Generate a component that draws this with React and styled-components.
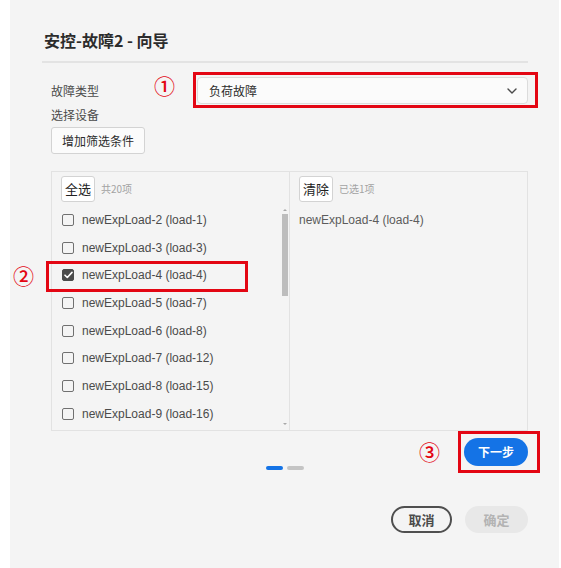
import React from 'react';
import styled, { createGlobalStyle } from 'styled-components';

const Global = createGlobalStyle`
  html, body { margin: 0; padding: 0; background: #ffffff; }
  body { font-family: "Liberation Sans", "Noto Sans CJK SC", sans-serif; }
  * { box-sizing: border-box; }
`;

const CJK = `"Noto Sans CJK SC", "Liberation Sans", sans-serif`;

const Page = styled.div`
  position: relative;
  width: 561px;
  height: 568px;
  padding-left: 10px;
  overflow: hidden;
`;

const Dialog = styled.div`
  width: 549px;
  height: 568px;
  background: #f4f4f4;
  padding: 28px 31px 0 32px;
  display: flex;
  flex-direction: column;
`;

const Title = styled.h2`
  margin: 0;
  padding-left: 2px;
  font: 700 16px/24px ${CJK};
  color: #2c2c2c;
`;

const Divider = styled.div`
  margin-top: 9px;
  height: 2px;
  background: #e3e3e3;
`;

const Form = styled.div`
  padding-left: 9px;
  margin-top: 14px;
  display: flex;
  flex-direction: column;
`;

const FieldRow = styled.div`
  display: flex;
  align-items: center;
  height: 27px;
`;

const Label = styled.div`
  width: 146px;
  font: 400 12px/16px ${CJK};
  color: #4b4b4b;
  margin-top: ${(p) => p.$mt || 0}px;
`;

const Select = styled.div`
  flex: 1;
  height: 27px;
  background: #fbfbfb;
  border: 1px solid #dcdcdc;
  border-radius: 4px;
  padding: 0 10px 0 11px;
  display: flex;
  align-items: center;
  justify-content: space-between;
  font: 400 12px/16px ${CJK};
  color: #2c2c2c;
`;

const GhostButton = styled.button`
  align-self: flex-start;
  margin-top: 4px;
  height: 27px;
  padding: 0 10px;
  background: #fbfbfb;
  border: 1px solid #d3d3d3;
  border-radius: 3px;
  font: 400 12px/16px ${CJK};
  color: #2c2c2c;
`;

const Transfer = styled.div`
  margin-top: 17px;
  height: 260px;
  border: 1px solid #e2e2e2;
  display: grid;
  grid-template-columns: 238px 1fr;
`;

const Panel = styled.div`
  display: flex;
  flex-direction: column;
  border-right: ${(p) => (p.$divider ? '1px solid #e2e2e2' : 'none')};
  min-height: 0;
`;

const PanelHeader = styled.div`
  display: flex;
  align-items: center;
  padding: 4px 0 0 9px;
  height: 30px;
`;

const HeaderButton = styled.button`
  height: 26px;
  padding: 0 3px;
  background: #ffffff;
  border: 1px solid #d3d3d3;
  border-radius: 3px;
  font: 400 13px/16px ${CJK};
  color: #222222;
`;

const Count = styled.span`
  margin-left: 6px;
  font: 400 10px/14px ${CJK};
  color: #a3a3a3;
`;

const PanelBody = styled.div`
  flex: 1;
  display: flex;
  margin-top: 4px;
  min-height: 0;
`;

const List = styled.div`
  flex: 1;
  display: flex;
  flex-direction: column;
  padding-left: ${(p) => p.$pl}px;
`;

const Item = styled.div`
  height: 27.7px;
  display: flex;
  align-items: center;
  font: 400 12px/16px "Liberation Sans", Arial, sans-serif;
  color: ${(p) => (p.$muted ? '#5c5c5c' : '#4b4b4b')};
  white-space: nowrap;
`;

const Box = styled.span`
  width: 12px;
  height: 12px;
  margin-right: 8px;
  border: 1.5px solid #707070;
  border-radius: 2px;
  background: ${(p) => (p.$checked ? '#4b4b4b' : 'transparent')};
  border-color: ${(p) => (p.$checked ? '#4b4b4b' : '#707070')};
  display: flex;
  align-items: center;
  justify-content: center;
`;

const ScrollTrack = styled.div`
  width: 7px;
  margin: 1px 1px 3px 0;
  display: flex;
  flex-direction: column;
  align-items: center;
`;

const ScrollArrow = styled.div`
  width: 0;
  height: 0;
  border-left: 2px solid transparent;
  border-right: 2px solid transparent;
  ${(p) => (p.$down ? 'border-top: 2px solid #a8a8a8;' : 'border-bottom: 2px solid #a8a8a8;')}
  margin: 2px 0;
`;

const ScrollThumb = styled.div`
  width: 6px;
  height: 82px;
  margin-top: 1px;
  background: #bdbdbd;
`;

const Spacer = styled.div`
  flex: 1;
`;

const ActionRow = styled.div`
  margin-top: 7px;
  display: flex;
  justify-content: flex-end;
`;

const PrimaryButton = styled.button`
  width: 64px;
  height: 28px;
  border: none;
  border-radius: 14px;
  background: #1473e6;
  color: #ffffff;
  font: 700 12px/16px ${CJK};
`;

const Dots = styled.div`
  display: flex;
  justify-content: center;
  gap: 4px;
`;

const Dot = styled.span`
  width: 17px;
  height: 4px;
  border-radius: 2px;
  background: ${(p) => (p.$active ? '#1473e6' : '#c4c4c4')};
`;

const Footer = styled.div`
  margin-top: 36px;
  display: flex;
  justify-content: flex-end;
  gap: 13px;
`;

const CancelButton = styled.button`
  width: 61px;
  height: 27px;
  border: 2px solid #4f4f4f;
  border-radius: 14px;
  background: transparent;
  color: #4b4b4b;
  font: 700 13px/16px ${CJK};
`;

const ConfirmButton = styled.button`
  width: 63px;
  height: 27px;
  border: none;
  border-radius: 14px;
  background: #e8e8e8;
  color: #b3b3b3;
  font: 700 13px/16px ${CJK};
`;

const RedBox = styled.div`
  position: absolute;
  left: ${(p) => p.$x}px;
  top: ${(p) => p.$y}px;
  width: ${(p) => p.$w}px;
  height: ${(p) => p.$h}px;
  border: 3px solid #e30613;
  pointer-events: none;
`;

const Marker = styled.span`
  position: absolute;
  left: ${(p) => p.$x}px;
  top: ${(p) => p.$y}px;
  font: 500 21px/22px ${CJK};
  color: #e30613;
`;

const Chevron = () => (
  <svg width="10" height="6" viewBox="0 0 10 6">
    <path d="M1 1l4 4 4-4" fill="none" stroke="#4b4b4b" strokeWidth="1.4" strokeLinecap="round" strokeLinejoin="round" />
  </svg>
);

const Check = () => (
  <svg width="9" height="8" viewBox="0 0 9 8">
    <path d="M1 4.2l2.3 2.3L8 1.4" fill="none" stroke="#ffffff" strokeWidth="1.6" strokeLinecap="round" strokeLinejoin="round" />
  </svg>
);

const items = [
  ['newExpLoad-2 (load-1)', false],
  ['newExpLoad-3 (load-3)', false],
  ['newExpLoad-4 (load-4)', true],
  ['newExpLoad-5 (load-7)', false],
  ['newExpLoad-6 (load-8)', false],
  ['newExpLoad-7 (load-12)', false],
  ['newExpLoad-8 (load-15)', false],
  ['newExpLoad-9 (load-16)', false],
];

export default function App() {
  return (
    <>
      <Global />
      <Page>
        <Dialog>
          <Title>安控-故障2 - 向导</Title>
          <Divider />
          <Form>
            <FieldRow>
              <Label>故障类型</Label>
              <Select>
                <span>负荷故障</span>
                <Chevron />
              </Select>
            </FieldRow>
            <Label $mt={3}>选择设备</Label>
            <GhostButton>增加筛选条件</GhostButton>
            <Transfer>
              <Panel $divider>
                <PanelHeader>
                  <HeaderButton>全选</HeaderButton>
                  <Count>共20项</Count>
                </PanelHeader>
                <PanelBody>
                  <List $pl={10}>
                    {items.map(([label, checked]) => (
                      <Item key={label}>
                        <Box $checked={checked}>{checked && <Check />}</Box>
                        {label}
                      </Item>
                    ))}
                  </List>
                  <ScrollTrack>
                    <ScrollArrow />
                    <ScrollThumb />
                    <Spacer />
                    <ScrollArrow $down />
                  </ScrollTrack>
                </PanelBody>
              </Panel>
              <Panel>
                <PanelHeader>
                  <HeaderButton>清除</HeaderButton>
                  <Count>已选1项</Count>
                </PanelHeader>
                <PanelBody>
                  <List $pl={9}>
                    <Item $muted>newExpLoad-4 (load-4)</Item>
                  </List>
                </PanelBody>
              </Panel>
            </Transfer>
          </Form>
          <ActionRow>
            <PrimaryButton>下一步</PrimaryButton>
          </ActionRow>
          <Dots>
            <Dot $active />
            <Dot />
          </Dots>
          <Footer>
            <CancelButton>取消</CancelButton>
            <ConfirmButton>确定</ConfirmButton>
          </Footer>
        </Dialog>
        <RedBox $x={193} $y={72} $w={345} $h={36} />
        <Marker $x={154} $y={74}>①</Marker>
        <RedBox $x={46} $y={261} $w={202} $h={31} />
        <Marker $x={13} $y={264}>②</Marker>
        <RedBox $x={458} $y={431} $w={82} $h={42} />
        <Marker $x={419} $y={440}>③</Marker>
      </Page>
    </>
  );
}
